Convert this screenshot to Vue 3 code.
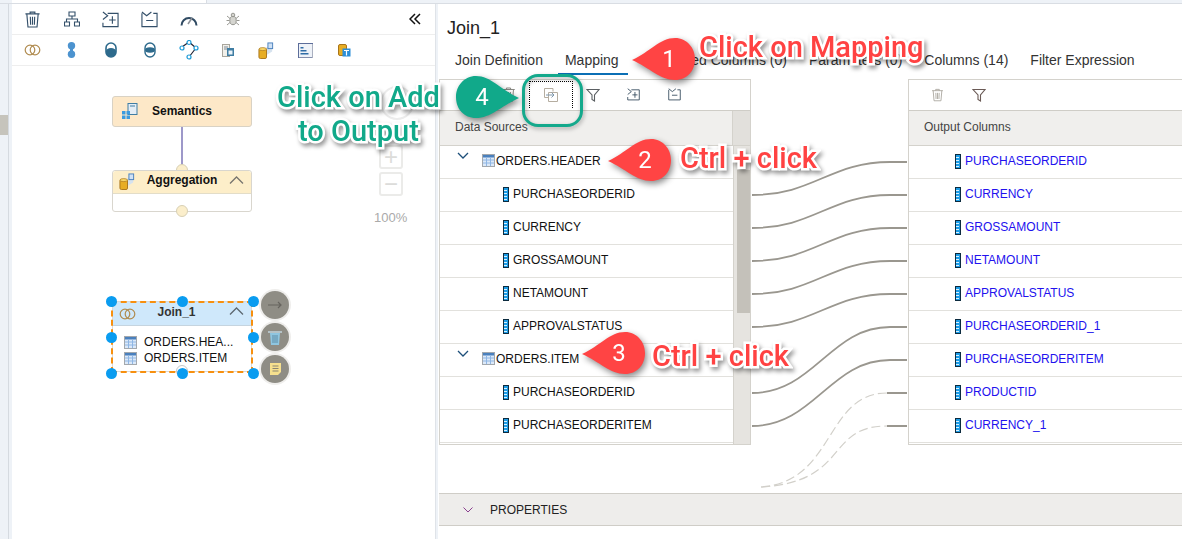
<template>
  <div class="app">
    <svg class="defs" width="0" height="0">
      <symbol id="i-trash" viewBox="0 0 18 18">
        <path d="M1.500 3h15M6.500 3V1.200h5V3M3 3l1.200 14h9.600L15 3M6.700 6l.3 8.500M9 6v8.500M11.300 6l-.3 8.500" fill="none" stroke="currentColor" stroke-width="1.200"/>
      </symbol>
      <symbol id="i-addin" viewBox="0 0 18 18">
        <path d="M1 1l5 4-5 4M6 2.500h11v14H1v-4M11 5.500v8M7.500 9.500h7" fill="none" stroke="currentColor" stroke-width="1.200"/>
      </symbol>
      <symbol id="i-addout" viewBox="0 0 18 18">
        <path d="M1 1l5 4 5-4M13 2.500h4v14H1V2.500M5.500 10h7.500" fill="none" stroke="currentColor" stroke-width="1.200"/>
      </symbol>
      <symbol id="i-filter" viewBox="0 0 14 14">
        <path d="M1 1.500h12L8.500 7v6L6 11.500V7z" fill="none" stroke="currentColor" stroke-width="1.100"/>
      </symbol>
      <symbol id="i-column" viewBox="0 0 6 15">
        <rect x=".5" y=".5" width="5" height="14" fill="#1c9ce6" stroke="#0c2b3f"/>
        <path d="M1 3.500h3M1 6.500h3M1 9.500h3M1 12.500h3" stroke="#d8f0ff"/>
      </symbol>
      <symbol id="i-table" viewBox="0 0 13 13">
        <rect x=".5" y=".5" width="12" height="12" fill="#dce9f8" stroke="#a3a8ad"/>
        <rect x="1" y="1" width="11" height="2.500" fill="#4a80bd"/>
        <path d="M4.500 3v9M8.500 3v9M1 6h11M1 9h11" stroke="#8fb6e4"/>
      </symbol>
      <symbol id="i-rings" viewBox="0 0 17 12">
        <circle cx="6" cy="6" r="4.800" fill="none" stroke="#b08b4f" stroke-width="1.200"/>
        <circle cx="11" cy="6" r="4.800" fill="none" stroke="#b08b4f" stroke-width="1.200"/>
      </symbol>
      <symbol id="i-agg" viewBox="0 0 18 18">
        <path d="M7 7l8-5v8l-8 5z" fill="#d6e2ee"/>
        <rect x="10.500" y="1" width="5" height="6" fill="#cfe1f5" stroke="#4a80bd"/>
        <rect x="1" y="7" width="8" height="10.500" rx="1.500" fill="#e7ad24" stroke="#a8741a"/>
        <ellipse cx="5" cy="7.500" rx="4" ry="1.600" fill="#f7d66a" stroke="#a8741a" stroke-width=".7"/>
      </symbol>
    </svg>

    <div class="topstrip"><div class="topstrip-white"></div></div>

    <div class="main">
      <div class="rail"><div class="rail-notch"></div></div>

      <div class="left">
        <div class="toolbar">
          <span class="tool"><svg class="ic18"><use href="#i-trash"/></svg></span>
          <span class="tool">
            <svg width="16" height="16" viewBox="0 0 16 16" fill="none" stroke="#34506a" stroke-width="1.100">
              <path d="M5 1h6v4H5zM8 5v3M2.500 11V8h11v3M.5 11h5v4h-5zM10.500 11h5v4h-5z"/>
            </svg>
          </span>
          <span class="tool"><svg class="ic18"><use href="#i-addin"/></svg></span>
          <span class="tool"><svg class="ic18"><use href="#i-addout"/></svg></span>
          <span class="tool">
            <svg width="18" height="14" viewBox="0 0 18 14" fill="none">
              <path d="M1.500 13.500A7.500 7.500 0 0 1 16.500 13.500" stroke="#2f4a62" stroke-width="2"/>
              <path d="M8 12l4-6" stroke="#8a8f96" stroke-width="1.500"/>
            </svg>
          </span>
          <span class="tool tool-bug">
            <svg width="14" height="14" viewBox="0 0 14 14" fill="#d5d5d0" stroke="#8f8f88" stroke-width=".9">
              <ellipse cx="7" cy="8.500" rx="3.200" ry="4.200"/>
              <circle cx="7" cy="3" r="1.800"/>
              <path d="M1 4l3 2.500M13 4l-3 2.500M.5 8.500h3M13.500 8.500h-3M1 13l3-2.500M13 13l-3-2.500" fill="none"/>
            </svg>
          </span>
          <span class="collapse">
            <svg width="12" height="12" viewBox="0 0 12 12" fill="none" stroke="#111" stroke-width="1.500">
              <path d="M6 1L1 6l5 5M11 1L6 6l5 5"/>
            </svg>
          </span>
        </div>

        <div class="toolbar">
          <span class="tool"><svg width="17" height="12"><use href="#i-rings"/></svg></span>
          <span class="tool">
            <svg width="9" height="16" viewBox="0 0 9 16" fill="#4c93cf">
              <circle cx="4.500" cy="3.800" r="3.700"/><circle cx="4.500" cy="12.200" r="3.700"/>
              <rect x="3" y="6" width="3" height="4"/>
            </svg>
          </span>
          <span class="tool">
            <svg width="12" height="16" viewBox="0 0 12 16">
              <rect x="1" y="1" width="10" height="14" rx="5" fill="#fff" stroke="#2d6a8c" stroke-width="1.600"/>
              <path d="M1 9a5 3 0 0 1 10 0V10a5 5 0 0 1-10 0z" fill="#2d6a8c"/>
            </svg>
          </span>
          <span class="tool">
            <svg width="12" height="16" viewBox="0 0 12 16">
              <rect x="1" y="1" width="10" height="14" rx="5" fill="#fff" stroke="#2d6a8c" stroke-width="1.400"/>
              <path d="M1 8a5 2.800 0 0 1 10 0 5 2.800 0 0 1-10 0z" fill="#2d6a8c"/>
            </svg>
          </span>
          <span class="tool">
            <svg width="20" height="20" viewBox="0 0 20 20" fill="#fff" stroke="#1c9ad6" stroke-width="1.200">
              <path d="M3 7l7-5M10 2l7 6M17 8l-7 9" stroke="#223"/>
              <circle cx="10" cy="2.500" r="2"/><circle cx="3" cy="8" r="2"/>
              <circle cx="17" cy="8" r="2"/><circle cx="10" cy="17" r="2"/>
            </svg>
          </span>
          <span class="tool">
            <svg width="12" height="13" viewBox="0 0 12 13">
              <rect x=".5" y=".5" width="7" height="12" fill="#f2f0ea" stroke="#a8a59c"/>
              <path d="M2 3h4M2 5h4" stroke="#7f8a96"/>
              <rect x="5" y="4" width="7" height="8" fill="#3f7da3"/>
              <rect x="6.500" y="6.500" width="4" height="4" fill="#eaf2f8"/>
            </svg>
          </span>
          <span class="tool"><svg width="17" height="17"><use href="#i-agg"/></svg></span>
          <span class="tool">
            <svg width="15" height="15" viewBox="0 0 15 15">
              <rect x=".5" y=".5" width="14" height="14" fill="#eef2f8" stroke="#5c6d9a"/>
              <path d="M14.500 1v14H1" fill="none" stroke="#aab0c0"/>
              <path d="M2.500 4h3v1.500h-3zM2.500 7h6v1.500h-6zM2.500 10h8v1.500h-8z" fill="#2f6ca6"/>
            </svg>
          </span>
          <span class="tool">
            <svg width="13" height="13" viewBox="0 0 13 13">
              <rect x=".5" y=".5" width="8" height="11" rx="1.500" fill="#e7ad24" stroke="#a8741a"/>
              <rect x="4.500" y="4.500" width="8" height="8" fill="#2b8ed8"/>
              <path d="M6 6.500h5M8.500 6.500v5" stroke="#fff" stroke-width="1.200"/>
            </svg>
          </span>
        </div>

        <div class="canvas">
          <div class="node semantics">
            <svg class="sem-icon" width="16" height="16" viewBox="0 0 16 16">
              <rect x="6" y=".5" width="9" height="11" fill="#e4edf5" stroke="#3f7da3"/>
              <path d="M8 3h5" stroke="#3f7da3"/>
              <path d="M0 8h3.500v3.500H0zM4.500 8H8v3.500H4.500zM0 12.500h3.500V16H0zM4.500 12.500H8V16H4.500z" fill="#3a9be0"/>
            </svg>
            <span>Semantics</span>
          </div>
          <div class="link-v"></div>
          <div class="port port-top"></div>
          <div class="node aggregation">
            <div class="node-head">
              <svg class="agg-icon" width="17" height="17"><use href="#i-agg"/></svg>
              <span>Aggregation</span>
              <svg class="node-chev" width="15" height="8" viewBox="0 0 15 8" fill="none" stroke="#77756e" stroke-width="1.300"><path d="M1 7.500L7.500 1 14 7.500"/></svg>
            </div>
          </div>
          <div class="port port-bottom"></div>

          <div class="nav-hint"></div>
          <div class="zoom-box zoom-plus">+</div>
          <div class="zoom-box zoom-minus">−</div>
          <div class="zoom-label">100%</div>

          <div class="node join">
            <div class="join-head">
              <svg class="join-icon" width="17" height="12"><use href="#i-rings"/></svg>
              <span>Join_1</span>
              <svg class="node-chev" width="15" height="8" viewBox="0 0 15 8" fill="none" stroke="#5d6870" stroke-width="1.300"><path d="M1 7.500L7.500 1 14 7.500"/></svg>
            </div>
            <div class="join-list">
              <div v-for="s in joinSources" :key="s" class="join-item">
                <svg width="13" height="13"><use href="#i-table"/></svg>{{ s }}
              </div>
            </div>
          </div>
          <div class="port port-join"></div>
          <div class="select-box"></div>
          <span v-for="h in handles" :key="h" class="handle" :class="h"></span>

          <div class="action act-1">
            <svg width="14" height="8" viewBox="0 0 14 8" fill="none" stroke="#66645e" stroke-width="1.200"><path d="M0 4h13M10 1l3 3-3 3"/></svg>
          </div>
          <div class="action act-2">
            <svg width="14" height="15" viewBox="0 0 14 15">
              <path d="M2 3h10l-1 12H3z" fill="#8fc6e0"/>
              <path d="M0 2h14" stroke="#cfe6f2" stroke-width="1.200"/>
              <path d="M5 5v8M7 5v8M9 5v8" stroke="#5f8da6"/>
            </svg>
          </div>
          <div class="action act-3">
            <svg width="11" height="12" viewBox="0 0 11 12">
              <path d="M0 0h11v9l-3 3H0z" fill="#f6e08e"/>
              <path d="M2.500 3h6M2.500 5.500h6M2.500 8h6" stroke="#8a8572"/>
            </svg>
          </div>
        </div>
      </div>

      <div class="gutter"></div>

      <div class="right">
        <div class="title">Join_1</div>
        <div class="tabs">
          <span v-for="t in tabs" :key="t" class="tab" :class="{ active: t === 'Mapping' }">{{ t }}</span>
        </div>

        <div class="mapping">
          <div class="grid grid-left">
            <div class="grid-tools tools-left">
              <span class="gtool"><svg width="15" height="15" style="color:#8a8a84"><use href="#i-trash"/></svg></span>
              <span class="gtool focus">
                <svg width="14" height="14" viewBox="0 0 14 14" fill="none" stroke="#b5ada0" stroke-width="1">
                  <path d="M9 3.500V.5H.5v9H4M4.500 4.500h9v9h-9z"/>
                  <path d="M2 7h8M7.500 4.500L10 7 7.500 9.500" stroke="#7f97ab"/>
                </svg>
              </span>
              <span class="gtool"><svg width="14" height="14" style="color:#5a5f62"><use href="#i-filter"/></svg></span>
              <span class="gtool"><svg width="13" height="13" style="color:#33495c"><use href="#i-addin"/></svg></span>
              <span class="gtool"><svg width="13" height="13" style="color:#33495c"><use href="#i-addout"/></svg></span>
            </div>
            <div class="grid-head">Data Sources<span class="scroll-head"></span></div>
            <div class="grid-body">
              <div class="rows">
                <div v-for="r in sourceRows" :key="r.key" class="row" :class="{ group: r.group }">
                  <template v-if="r.group">
                    <svg class="row-chev" width="12" height="7" viewBox="0 0 12 7" fill="none" stroke="#1d4f7a" stroke-width="1.300"><path d="M1 1l5 5 5-5"/></svg>
                    <svg class="row-table" width="13" height="13"><use href="#i-table"/></svg>
                  </template>
                  <svg v-else class="row-col" width="6" height="15"><use href="#i-column"/></svg>
                  <span>{{ r.name }}</span>
                </div>
              </div>
              <div class="scrollbar"><div class="thumb"></div></div>
            </div>
          </div>

          <div class="grid grid-right">
            <div class="grid-tools tools-right">
              <span class="gtool"><svg width="13" height="14" style="color:#a8a59c"><use href="#i-trash"/></svg></span>
              <span class="gtool"><svg width="14" height="14" style="color:#6a5a55"><use href="#i-filter"/></svg></span>
            </div>
            <div class="grid-head head-right">Output Columns</div>
            <div class="rows">
              <div v-for="c in outputCols" :key="c" class="row out">
                <svg class="row-col" width="6" height="15"><use href="#i-column"/></svg>
                <span>{{ c }}</span>
              </div>
            </div>
          </div>
        </div>

        <div class="properties">
          <svg width="10" height="6" viewBox="0 0 10 6" fill="none" stroke="#8a3f8f" stroke-width="1"><path d="M.5.500L5 5 9.500.500"/></svg>
          <span>PROPERTIES</span>
        </div>
      </div>
    </div>

    <svg class="links" width="1182" height="539" fill="none">
      <path v-for="p in solidLinks" :key="p" :d="p" stroke="#9a978f" stroke-width="1.800"/>
      <path v-for="p in dashedLinks" :key="p" :d="p" stroke="#d2d0ca" stroke-width="1.200" stroke-dasharray="9 4"/>
      <path d="M887 393h20M887 426h20" stroke="#9a978f" stroke-width="1.800"/>
    </svg>

    <div class="focus-ring"></div>

    <div v-for="c in callouts" :key="c.n" class="callout" :class="c.cls">
      <svg width="63" height="42" viewBox="0 0 63 42">
        <path d="M0 22C18 14 28 0 43 0 55 0 63 10 63 21 63 33 55 42 43 42 28 42 18 30 0 22Z"/>
      </svg>
      <b>{{ c.n }}</b>
    </div>

    <div class="note red n-mapping">Click on Mapping</div>
    <div class="note red n-ctrl1">Ctrl + click</div>
    <div class="note red n-ctrl2">Ctrl + click</div>
    <div class="note green n-add">Click on Add<br>to Output</div>
  </div>
</template>

<script setup>
const tabs = ['Join Definition', 'Mapping', 'Calculated Columns (0)', 'Parameters (0)', 'Columns (14)', 'Filter Expression']

const joinSources = ['ORDERS.HEA...', 'ORDERS.ITEM']
const handles = ['h-tl', 'h-tc', 'h-tr', 'h-ml', 'h-mr', 'h-bl', 'h-bc', 'h-br']

const sourceRows = [
  { key: 'h', name: 'ORDERS.HEADER', group: true },
  { key: 'h1', name: 'PURCHASEORDERID' },
  { key: 'h2', name: 'CURRENCY' },
  { key: 'h3', name: 'GROSSAMOUNT' },
  { key: 'h4', name: 'NETAMOUNT' },
  { key: 'h5', name: 'APPROVALSTATUS' },
  { key: 'i', name: 'ORDERS.ITEM', group: true },
  { key: 'i1', name: 'PURCHASEORDERID' },
  { key: 'i2', name: 'PURCHASEORDERITEM' }
]

const outputCols = [
  'PURCHASEORDERID', 'CURRENCY', 'GROSSAMOUNT', 'NETAMOUNT', 'APPROVALSTATUS',
  'PURCHASEORDERID_1', 'PURCHASEORDERITEM', 'PRODUCTID', 'CURRENCY_1'
]

// left row y -> right row y
const curve = (x, y1, y2, ex = 890) =>
  `M${x} ${y1}C${x + 62} ${y1} ${x + 78} ${y2} ${ex} ${y2}`

const solidLinks = [[195, 162], [228, 195], [261, 228], [294, 261], [327, 294], [393, 327], [426, 360]]
  .map(([a, b]) => curve(752, a, b) + 'L907 ' + b)

const dashedLinks = [
  'M761 487C835 482 825 393 887 393',
  'M761 487C850 482 825 426 887 426'
]

const callouts = [
  { n: 1, cls: 'c1' },
  { n: 2, cls: 'c2' },
  { n: 3, cls: 'c3' },
  { n: 4, cls: 'c4' }
]
</script>

<style>
html, body { margin: 0; background: #fff; }
</style>

<style scoped>
.app { position: relative; width: 1182px; height: 539px; overflow: hidden; background: #fff; font-family: "Liberation Sans", Arial, sans-serif; font-size: 12px; color: #222; display: flex; flex-direction: column; }
.defs { position: absolute; }

.topstrip { height: 3px; background: #eef2f7; border-bottom: 1px solid #d9dde3; flex: none; }
.topstrip-white { margin-left: 12px; width: 194px; height: 3px; background: #fff; border-right: 1px solid #d9dde3; }

.main { flex: 1; display: flex; min-height: 0; }
.rail { width: 8px; background: #eef2f7; border-right: 1px solid #d5dae0; margin-right: 3px; box-shadow: 3px 0 0 #eef2f7; position: relative; }
.rail-notch { position: absolute; left: 0; top: 111px; width: 8px; height: 20px; background: #c6c4bc; }

.left { width: 423px; flex: none; display: flex; flex-direction: column; }
.toolbar { height: 30px; flex: none; display: flex; align-items: center; border-bottom: 1px solid #eee; padding-left: 1px; color: #34506a; }
.tool { width: 39px; display: flex; justify-content: center; align-items: center; }
.tool-bug { padding-left: 11px; box-sizing: border-box; }
.ic18 { width: 17px; height: 17px; }
.collapse { margin-left: auto; margin-right: 14px; display: flex; }

.canvas { position: relative; flex: 1; }
.node { position: absolute; left: 100px; width: 140px; box-sizing: border-box; border-radius: 3px; font-weight: bold; color: #111; }
.semantics { top: 30px; height: 31px; background: #fde8c8; border: 1px solid #d9d2c4; display: flex; align-items: center; justify-content: center; padding-bottom: 2px; }
.sem-icon { position: absolute; left: 9px; top: 6px; }
.link-v { position: absolute; left: 169px; top: 61px; width: 2px; height: 44px; background: #9d98c9; }
.port { position: absolute; width: 12px; height: 12px; border-radius: 50%; box-sizing: border-box; background: #fbeecb; border: 1px solid #d8d0b4; }
.port-top { left: 164px; top: 98px; }
.aggregation { top: 104px; height: 42px; border: 1px solid #d9d6ce; background: #fff; }
.node-head { height: 23px; background: #fdeec9; border-bottom: 1px solid #e3ddc8; display: flex; align-items: center; justify-content: center; position: relative; border-radius: 3px 3px 0 0; padding-bottom: 4px; box-sizing: border-box; }
.agg-icon { position: absolute; left: 6px; top: 2px; }
.node-chev { position: absolute; right: 7px; top: 5px; }
.port-bottom { left: 164px; top: 139px; }

.nav-hint { position: absolute; left: 368px; top: 20px; width: 30px; height: 30px; border: 2px solid #ececec; border-radius: 50%; }
.zoom-box { position: absolute; left: 367px; width: 24px; height: 24px; box-sizing: border-box; border: 2px solid #ebebe9; border-radius: 3px; color: #dcdcda; font-size: 24px; line-height: 19px; text-align: center; }
.zoom-plus { top: 79px; }
.zoom-minus { top: 106px; }
.zoom-label { position: absolute; left: 362px; top: 144px; font-size: 13px; color: #aaa; }

.join { top: 235px; height: 71px; background: #fff; border: 1px solid #d9d9d9; font-weight: normal; }
.join-head { height: 24px; background: #cfe8fb; border-bottom: 1px solid #c5d4df; box-sizing: border-box; display: flex; align-items: center; justify-content: center; position: relative; font-weight: bold; color: #333; padding: 0 11px 3px 0; }
.join-icon { position: absolute; left: 6px; top: 6px; }
.join-list { padding: 8px 0 0 11px; }
.join-item { display: flex; align-items: center; gap: 7px; height: 16px; color: #111; }
.port-join { left: 164px; top: 299px; background: #fff; border-color: #c8c8c8; }
.select-box { position: absolute; left: 99px; top: 235px; width: 142px; height: 72px; box-sizing: border-box; border: 2px dashed #f7900f; }
.handle { position: absolute; width: 11px; height: 11px; border-radius: 50%; background: #0a9cf0; }
.h-tl, .h-ml, .h-bl { left: 94px; }
.h-tc, .h-bc { left: 165px; }
.h-tr, .h-mr, .h-br { left: 236px; }
.h-tl, .h-tc, .h-tr { top: 230px; }
.h-ml, .h-mr { top: 266px; }
.h-bl, .h-bc, .h-br { top: 302px; }
.action { position: absolute; left: 249px; width: 28px; height: 28px; border-radius: 50%; background: #8f8d85; box-shadow: 0 0 0 2px #efeeec; display: flex; align-items: center; justify-content: center; }
.act-1 { top: 225px; }
.act-2 { top: 257px; }
.act-3 { top: 289px; }

.gutter { width: 3px; flex: none; background: #eef2f7; border-left: 1px solid #dfe3e8; box-sizing: border-box; }

.right { flex: 1; min-width: 0; display: flex; flex-direction: column; }
.title { margin: 14px 0 0 9px; font-size: 18px; line-height: 20px; color: #222; }
.tabs { height: 29px; margin-top: 8px; padding-left: 6px; display: flex; flex: none; font-size: 14px; line-height: 28px; color: #333; white-space: nowrap; }
.tab { padding: 0 11px; position: relative; }
.tab.active::after { content: ""; position: absolute; left: 4px; right: 2px; bottom: 0; height: 2px; background: #0b6fb5; }

.mapping { margin: 4px 0 0 1px; height: 366px; display: flex; gap: 157px; flex: none; }
.grid { box-sizing: border-box; border: 1px solid #d4d2cc; display: flex; flex-direction: column; }
.grid-left { width: 312px; }
.grid-right { flex: 1; border-right: 0; }
.grid-tools { height: 31px; flex: none; box-sizing: border-box; padding-top: 1px; display: flex; align-items: flex-start; border-bottom: 1px solid #cfcdc7; }
.tools-left { padding-left: 48px; }
.tools-right { padding-left: 8px; }
.gtool { width: 41px; height: 27px; box-sizing: border-box; display: flex; align-items: center; justify-content: center; }
.gtool.focus { width: 44px; margin-right: -1px; border: 1px dotted #000; border-bottom: 0; }
.grid-head { height: 35px; flex: none; box-sizing: border-box; background: #f0efed; border-bottom: 1px solid #d4d2cc; display: flex; align-items: center; padding: 0 0 3px 15px; color: #444; position: relative; }
.scroll-head { position: absolute; right: 0; top: 0; bottom: 0; width: 17px; background: #e2e0dc; border-left: 1px solid #d4d2cc; }
.grid-body { flex: 1; display: flex; min-height: 0; overflow: hidden; }
.rows { flex: 1; min-width: 0; }
.row { height: 33px; box-sizing: border-box; border-bottom: 1px solid #e2e1dd; display: flex; align-items: center; position: relative; padding: 0 0 2px 73px; color: #111; }
.row.group { padding-left: 56px; }
.row-chev { position: absolute; left: 17px; top: 6px; }
.row-col { position: absolute; left: 63px; top: 8px; }
.row-table { position: absolute; left: 42px; top: 8px; }
.row.out { padding-left: 56px; color: #2211ee; }
.row.out .row-col { left: 46px; }
.scrollbar { width: 17px; flex: none; box-sizing: border-box; background: #e6e4e0; border-left: 1px solid #d4d2cc; padding: 24px 0 0 3px; }
.thumb { height: 143px; background: #c4c1ba; }
.head-right { padding-left: 15px; }

.properties { margin: 48px 0 0 1px; height: 33px; box-sizing: border-box; background: #eeedeb; border-top: 1px solid #cfcdc7; border-bottom: 1px solid #cfcdc7; display: flex; align-items: center; padding-left: 24px; gap: 17px; color: #222; }

.links { position: absolute; left: 0; top: 0; pointer-events: none; }

.focus-ring { position: absolute; left: 522px; top: 74px; width: 61px; height: 53px; box-sizing: border-box; border: 3px solid #14a98c; border-radius: 16px; filter: drop-shadow(1px 2px 2px rgba(0,0,0,.3)); }

.callout { position: absolute; width: 63px; height: 42px; filter: drop-shadow(2px 3px 3px rgba(0,0,0,.45)); }
.callout svg { display: block; fill: #ff4444; }
.callout b { position: absolute; top: 0; left: 0; width: 63px; padding-left: 11px; box-sizing: border-box; text-align: center; line-height: 42px; font-family: Roboto, "Liberation Sans", sans-serif; font-weight: 400; font-size: 24px; color: #fff; }
.c1 { left: 632px; top: 38px; }
.c2 { left: 608px; top: 139px; }
.c3 { left: 582px; top: 332px; }
.c4 { left: 456px; top: 76px; }
.c4 svg { transform: scaleX(-1); fill: #11a98a; }
.c4 b { padding: 0 11px 0 0; }

.note { position: absolute; white-space: nowrap; font-family: Roboto, "Liberation Sans", sans-serif; font-size: 29px; font-weight: 500; line-height: 34px; -webkit-text-stroke: 5px #fff; paint-order: stroke fill; filter: drop-shadow(2px 3px 2px rgba(0,0,0,.4)); }
.note.red { color: #ff4242; }
.note.green { color: #11a98a; text-align: center; }
.n-mapping { left: 699px; top: 30px; }
.n-ctrl1 { left: 680px; top: 141px; }
.n-ctrl2 { left: 652px; top: 339px; }
.n-add { left: 277px; top: 80px; }
</style>
